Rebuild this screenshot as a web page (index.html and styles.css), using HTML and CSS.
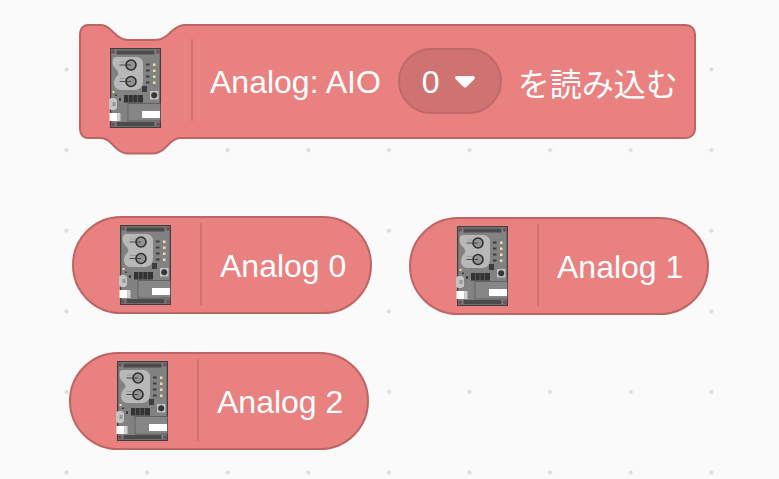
FILE: index.html
```html
<!DOCTYPE html>
<html lang="ja">
<head>
<meta charset="utf-8">
<title>Analog blocks</title>
<link rel="stylesheet" href="styles.css">
</head>
<body>
<svg class="defs" width="0" height="0" aria-hidden="true">
  <defs>
    <symbol id="board" viewBox="-1 0 52 80">
      <rect x="0.5" y="0.5" width="50" height="79" fill="#828282" stroke="#3f3f3f"/>
      <rect x="1.5" y="1.5" width="48" height="77" fill="none" stroke="#5c5c5c" stroke-dasharray="1 1"/>
      <rect x="6.5" y="2.5" width="38" height="4" fill="#4b4b4b"/>
      <rect x="6.5" y="74" width="38" height="4" fill="#4b4b4b"/>
      <g fill="#c0505a" stroke="#3a3a3a" stroke-width="0.7">
        <circle cx="3.2" cy="3.800" r="1.3"/><circle cx="47.800" cy="3.800" r="1.3"/>
        <circle cx="3.2" cy="76.200" r="1.3"/><circle cx="47.800" cy="76.200" r="1.3"/>
      </g>
      <path d="M6 9H26Q31 9 33 14V33Q33 41 26 42H11Q5 42 4 36Q4 30 8 27Q9 24 6 21Q2.500 18 2.500 14Q2.500 9 6 9Z" fill="#b8b8b8"/>
      <g fill="#929292" stroke="#2e2e2e" stroke-width="1.6">
        <circle cx="21" cy="17" r="5"/><circle cx="21" cy="33.500" r="5"/>
      </g>
      <path d="M9.500 17H21M9.500 33.500H21" stroke="#3d3d3d" stroke-width="0.9"/>
      <path d="M10 14H16M10 30.500H16" stroke="#8f8f8f" stroke-width="0.7"/>
      <g fill="#3d3d3d">
        <rect x="36" y="15.500" width="3.500" height="2"/><rect x="36" y="21.500" width="3.500" height="2"/>
        <rect x="36" y="27.500" width="3.500" height="2"/><rect x="36" y="33.500" width="3.500" height="2"/>
      </g>
      <g fill="#f0dca6">
        <rect x="43" y="15.500" width="2.500" height="2.500"/><rect x="43" y="21.500" width="2.500" height="2.500"/>
        <rect x="43" y="27.500" width="2.500" height="2.500"/><rect x="43" y="33.500" width="2.500" height="2.500"/>
        <rect x="2.500" y="43" width="2" height="2"/>
      </g>
      <rect x="32" y="38" width="5" height="6" fill="#3d3d3d"/>
      <rect x="40" y="43" width="8.500" height="8.500" fill="#c2c2c2"/>
      <circle cx="44.200" cy="47.200" r="3" fill="#363636"/>
      <rect x="14" y="47" width="19" height="7.500" fill="#333"/>
      <path d="M18.500 47v7.500M23 47v7.500M27.500 47v7.500" stroke="#6e6e6e" stroke-width="0.7"/>
      <rect x="5" y="46.500" width="2" height="1.500" fill="#3d3d3d"/>
      <rect x="9" y="50" width="2" height="3" fill="#3d3d3d"/>
      <path d="M-1 51.500L1 50H5L7 52V60L5 62H1L-1 60.500Z" fill="#c4c4c4"/>
      <rect x="2.500" y="54" width="3" height="4" fill="#979797"/>
      <rect x="-0.500" y="65" width="8" height="8" fill="#fff"/>
      <rect x="7.500" y="65" width="3" height="8" fill="#d0d0d0"/>
      <rect x="18" y="55.500" width="32.500" height="17.500" fill="#868686" stroke="#555" stroke-width="0.7"/>
      <rect x="32" y="63" width="18" height="7" fill="#fff"/>
    </symbol>
  </defs>
</svg>

<main class="workspace">
  <section class="block reporter-stack">
    <svg class="stack-shape" viewBox="0 0 618 131" aria-hidden="true">
      <path d="M9 1H21C26 1 29 3 32 6L38 11.500C42 15 46 16 50 16H75C80 16 84 15 88 11.500L94 6C98 3 101 1 106 1H607C612 1 616 5 616 10V105C616 110 612 114 607 114H102C97 114 94 116 91 119L86 124C82 128 78 129.500 73 129.500H50C45 129.500 41 128 37 124L32 119C29 116 26 114 21 114H9C4 114 1 110 1 105V10C1 5 4 1 9 1Z" fill="#e98181" stroke="#bd6565" stroke-width="2"/>
    </svg>
    <svg class="board-icon board-icon-low"><use href="#board"/></svg>
    <span class="divider"></span>
    <span class="label">Analog: AIO</span>
    <span class="dropdown">
      <span class="label">0</span>
      <svg class="caret" viewBox="0 0 20 12" aria-hidden="true"><path d="M2 0H18C20 0 20.500 2 19 3.500L12 10.500C11 11.700 9 11.700 8 10.500L1 3.500C-0.500 2 0 0 2 0Z" fill="#fff"/></svg>
    </span>
    <span class="label label-ja">を読み込む</span>
  </section>

  <section class="block pill pill-a0">
    <svg class="board-icon"><use href="#board"/></svg>
    <span class="divider"></span>
    <span class="label">Analog 0</span>
  </section>
  <section class="block pill pill-a1">
    <svg class="board-icon"><use href="#board"/></svg>
    <span class="divider"></span>
    <span class="label">Analog 1</span>
  </section>
  <section class="block pill pill-a2">
    <svg class="board-icon"><use href="#board"/></svg>
    <span class="divider"></span>
    <span class="label">Analog 2</span>
  </section>
</main>
</body>
</html>
```

FILE: styles.css
```css
html, body {
  margin: 0;
  padding: 0;
  height: 100%;
  overflow: hidden;
}

.defs {
  position: absolute;
}

.workspace {
  position: relative;
  width: 779px;
  height: 479px;
  overflow: hidden;
  background-color: #fafafa;
  background-image: radial-gradient(circle at center, #dcdcdc 0, #dcdcdc 1.6px, transparent 2.4px);
  background-size: 80.62px 80.62px;
  background-position: 26.2px 29.2px;
  font-family: "Liberation Sans", "Noto Sans CJK JP", sans-serif;
  color: #fff;
}

.block {
  position: absolute;
  display: flex;
  align-items: center;
  box-sizing: border-box;
}

.reporter-stack {
  left: 79px;
  top: 24px;
  width: 618px;
  height: 114px;
  padding-left: 31px;
}

.stack-shape {
  position: absolute;
  left: 0;
  top: 0;
  width: 618px;
  height: 131px;
}

.board-icon {
  position: relative;
  flex: none;
  width: 52px;
  height: 80px;
  margin-left: -1px;
  filter: blur(0.3px);
}

.board-icon-low {
  margin-top: 14px;
}

.divider {
  position: relative;
  flex: none;
  width: 2px;
  height: 82px;
  margin: 0 17px 2px 30px;
  background: #d07272;
}

.label {
  position: relative;
  padding-top: 2px;
  font-size: 32px;
  line-height: 40px;
  white-space: nowrap;
}

.pill .label {
  margin-left: 1px;
}

.pill .board-icon {
  margin-right: -1px;
}

.label-ja {
  margin-left: 16px;
  font-family: "Noto Sans CJK JP", "Liberation Sans", sans-serif;
  font-weight: 400;
}

.dropdown {
  position: relative;
  flex: none;
  display: flex;
  align-items: center;
  box-sizing: border-box;
  width: 104px;
  height: 66px;
  margin-left: 17px;
  padding-left: 22px;
  gap: 15px;
  background: #cf7272;
  border: 2px solid #c06969;
  border-radius: 33px;
}

.caret {
  flex: none;
  width: 20px;
  height: 12px;
  margin-top: 2px;
}

.pill {
  width: 300px;
  height: 98px;
  padding-left: 46px;
  background: #e98181;
  border: 2px solid #bd6565;
  border-radius: 49px;
}

.pill-a0 {
  left: 72px;
  top: 216px;
}

.pill-a1 {
  left: 409px;
  top: 217px;
}

.pill-a2 {
  left: 69px;
  top: 352px;
}
```
